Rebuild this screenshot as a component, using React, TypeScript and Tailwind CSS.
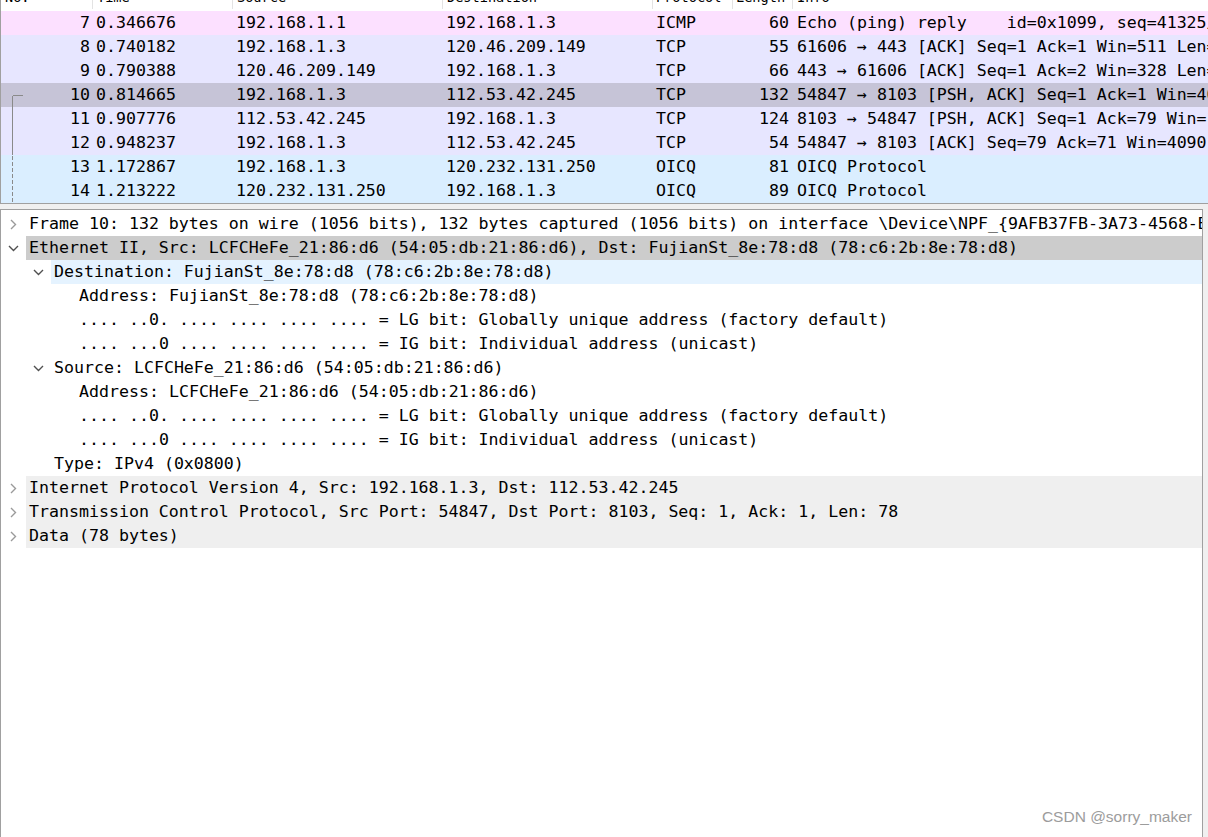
import React from 'react';

type Packet = {
  no: number;
  time: string;
  src: string;
  dst: string;
  proto: string;
  len: number;
  info: string;
  bg: string;
  link?: 'start' | 'solid' | 'dashed';
};

const PACKETS: Packet[] = [
  { no: 7, time: '0.346676', src: '192.168.1.1', dst: '192.168.1.3', proto: 'ICMP', len: 60, info: 'Echo (ping) reply    id=0x1099, seq=41325/27809, ttl=64 (request in 6)', bg: 'bg-[#fce0ff]' },
  { no: 8, time: '0.740182', src: '192.168.1.3', dst: '120.46.209.149', proto: 'TCP', len: 55, info: '61606 → 443 [ACK] Seq=1 Ack=1 Win=511 Len=0', bg: 'bg-[#e7e6ff]' },
  { no: 9, time: '0.790388', src: '120.46.209.149', dst: '192.168.1.3', proto: 'TCP', len: 66, info: '443 → 61606 [ACK] Seq=1 Ack=2 Win=328 Len=0', bg: 'bg-[#e7e6ff]' },
  { no: 10, time: '0.814665', src: '192.168.1.3', dst: '112.53.42.245', proto: 'TCP', len: 132, info: '54847 → 8103 [PSH, ACK] Seq=1 Ack=1 Win=4096 Len=78', bg: 'bg-[#c6c4d7]', link: 'start' },
  { no: 11, time: '0.907776', src: '112.53.42.245', dst: '192.168.1.3', proto: 'TCP', len: 124, info: '8103 → 54847 [PSH, ACK] Seq=1 Ack=79 Win=1024 Len=70', bg: 'bg-[#e7e6ff]', link: 'solid' },
  { no: 12, time: '0.948237', src: '192.168.1.3', dst: '112.53.42.245', proto: 'TCP', len: 54, info: '54847 → 8103 [ACK] Seq=79 Ack=71 Win=4090 Len=0', bg: 'bg-[#e7e6ff]', link: 'solid' },
  { no: 13, time: '1.172867', src: '192.168.1.3', dst: '120.232.131.250', proto: 'OICQ', len: 81, info: 'OICQ Protocol', bg: 'bg-[#daeeff]', link: 'dashed' },
  { no: 14, time: '1.213222', src: '120.232.131.250', dst: '192.168.1.3', proto: 'OICQ', len: 89, info: 'OICQ Protocol', bg: 'bg-[#daeeff]', link: 'dashed' },
];

type Node = {
  level: 0 | 1 | 2;
  text: string;
  arrow?: 'open' | 'closed';
  bg?: string;
};

const TREE: Node[] = [
  { level: 0, arrow: 'closed', text: 'Frame 10: 132 bytes on wire (1056 bits), 132 bytes captured (1056 bits) on interface \\Device\\NPF_{9AFB37FB-3A73-4568-B1A2-6C7D0E3F9A10}, id 0' },
  { level: 0, arrow: 'open', bg: 'bg-[#cccccc]', text: 'Ethernet II, Src: LCFCHeFe_21:86:d6 (54:05:db:21:86:d6), Dst: FujianSt_8e:78:d8 (78:c6:2b:8e:78:d8)' },
  { level: 1, arrow: 'open', bg: 'bg-[#e5f3ff]', text: 'Destination: FujianSt_8e:78:d8 (78:c6:2b:8e:78:d8)' },
  { level: 2, text: 'Address: FujianSt_8e:78:d8 (78:c6:2b:8e:78:d8)' },
  { level: 2, text: '.... ..0. .... .... .... .... = LG bit: Globally unique address (factory default)' },
  { level: 2, text: '.... ...0 .... .... .... .... = IG bit: Individual address (unicast)' },
  { level: 1, arrow: 'open', text: 'Source: LCFCHeFe_21:86:d6 (54:05:db:21:86:d6)' },
  { level: 2, text: 'Address: LCFCHeFe_21:86:d6 (54:05:db:21:86:d6)' },
  { level: 2, text: '.... ..0. .... .... .... .... = LG bit: Globally unique address (factory default)' },
  { level: 2, text: '.... ...0 .... .... .... .... = IG bit: Individual address (unicast)' },
  { level: 1, text: 'Type: IPv4 (0x0800)' },
  { level: 0, arrow: 'closed', bg: 'bg-[#efefef]', text: 'Internet Protocol Version 4, Src: 192.168.1.3, Dst: 112.53.42.245' },
  { level: 0, arrow: 'closed', bg: 'bg-[#efefef]', text: 'Transmission Control Protocol, Src Port: 54847, Dst Port: 8103, Seq: 1, Ack: 1, Len: 78' },
  { level: 0, arrow: 'closed', bg: 'bg-[#efefef]', text: 'Data (78 bytes)' },
];

const INDENT = ['pl-0', 'pl-[25px]', 'pl-[50px]'];

const LinkMark = ({ kind }: { kind?: Packet['link'] }) => {
  if (!kind) return <div className="w-[24px]" />;
  return (
    <svg width="24" height="24" className="shrink-0" shapeRendering="crispEdges">
      {kind === 'start' && <path d="M11.5 12.5H21.5M11.5 12.5V24" stroke="#8a8a8a" fill="none" />}
      {kind === 'solid' && <path d="M11.5 0V24" stroke="#8a8a8a" fill="none" />}
      {kind === 'dashed' && <path d="M11.5 1V24" stroke="#8a8a8a" strokeDasharray="4 2" fill="none" />}
    </svg>
  );
};

const Chevron = ({ open }: { open: boolean }) =>
  open ? (
    <svg width="11" height="7" viewBox="0 0 11 7">
      <path d="M1 1L5.5 5.5L10 1" stroke="#505050" strokeWidth="1.4" fill="none" />
    </svg>
  ) : (
    <svg width="7" height="11" viewBox="0 0 7 11">
      <path d="M1 1L5.5 5.5L1 10" stroke="#9a9a9a" strokeWidth="1.4" fill="none" />
    </svg>
  );

const HEADERS = [
  { label: 'No.', cls: 'w-[92px] pl-[4px]' },
  { label: 'Time', cls: 'w-[140px] pl-[4px]' },
  { label: 'Source', cls: 'w-[210px] pl-[4px]' },
  { label: 'Destination', cls: 'w-[210px] pl-[4px]' },
  { label: 'Protocol', cls: 'w-[80px] pl-[3px]' },
  { label: 'Length', cls: 'w-[60px] pl-[3px]' },
];

const App = (): JSX.Element => {
  return (
    <div className="flex h-[837px] w-[1208px] flex-col overflow-hidden bg-[#f0f0f0] font-['DejaVu_Sans_Mono',monospace] text-[16.6px] text-black">
      {/* packet list */}
      <div className="h-[204px] shrink-0 overflow-hidden border-b border-l border-[#a0a0a0] bg-white">
        <div className="h-[11px] overflow-hidden">
          <div className="-mt-[15px] flex h-[24px] items-center whitespace-pre text-[13.6px] leading-[24px]">
            {HEADERS.map((h) => (
              <div key={h.label} className={`${h.cls} h-full shrink-0 border-r border-[#e3e3e3]`}>
                {h.label}
              </div>
            ))}
            <div className="pl-[4px]">Info</div>
          </div>
        </div>
        {PACKETS.map((p) => (
          <div key={p.no} className={`flex h-6 items-center whitespace-pre leading-6 ${p.bg}`}>
            <div className="flex w-[92px] shrink-0 items-center pr-[3px]">
              <LinkMark kind={p.link} />
              <span className="flex-1 text-right">{p.no}</span>
            </div>
            <div className="w-[140px] shrink-0 pl-[3px]">{p.time}</div>
            <div className="w-[210px] shrink-0 pl-[3px]">{p.src}</div>
            <div className="w-[210px] shrink-0 pl-[3px]">{p.dst}</div>
            <div className="w-[80px] shrink-0 pl-[3px]">{p.proto}</div>
            <div className="w-[60px] shrink-0 pr-[4px] text-right">{p.len}</div>
            <div className="flex-1 overflow-hidden pl-[4px]">{p.info}</div>
          </div>
        ))}
      </div>

      {/* details */}
      <div className="relative mt-[5px] mr-[5px] flex-1 overflow-hidden border-t border-r border-l border-[#a0a0a0] bg-white pt-[2px]">
        {TREE.map((n, i) => (
          <div key={i} className={`flex h-6 items-center whitespace-pre leading-6 ${INDENT[n.level]}`}>
            <div className="flex h-full w-[25px] shrink-0 items-center justify-center">
              {n.arrow && <Chevron open={n.arrow === 'open'} />}
            </div>
            <div className={`h-full flex-1 overflow-hidden pl-[3px] ${n.bg ?? ''}`}>{n.text}</div>
          </div>
        ))}
        <div className="absolute right-[10px] bottom-[9px] font-['Liberation_Sans',sans-serif] text-[15.5px] text-[#9c9c9c]">
          CSDN @sorry_maker
        </div>
      </div>
    </div>
  );
};

export default App;
